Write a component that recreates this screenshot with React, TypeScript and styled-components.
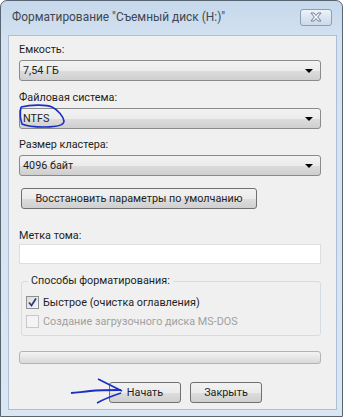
import styled, { createGlobalStyle } from 'styled-components';

const GlobalStyle = createGlobalStyle`
  html, body {
    margin: 0;
    padding: 0;
    background: #ffffff;
  }
  body {
    font-family: Roboto, "Noto Sans", sans-serif;
    font-size: 10.8px;
    color: #1e1e1e;
  }
`;

const Window = styled.div`
  position: relative;
  width: 343px;
  height: 417px;
  box-sizing: border-box;
  display: flex;
  flex-direction: column;
  border: 1px solid #5a6572;
  border-radius: 7px 7px 0 0;
  background: linear-gradient(180deg, #c6d8ec 0%, #d4e2f1 40px, #d9e6f4 100%);
  padding: 0 5px 6px 7px;
`;

const TitleBar = styled.div`
  height: 32px;
  flex: none;
  display: flex;
  align-items: center;
  justify-content: space-between;
  padding: 0 5px 2px 4px;
`;

const Title = styled.div`
  font-size: 11.9px;
  color: #3f4750;
  white-space: nowrap;
`;

const CloseButton = styled.div`
  width: 30px;
  height: 15px;
  border: 1px solid #8c9db4;
  border-radius: 3px;
  background: linear-gradient(180deg, #eef3f9 0%, #dbe5f1 50%, #ccdaea 100%);
  display: flex;
  align-items: center;
  justify-content: center;
`;

const Client = styled.div`
  flex: 1;
  display: flex;
  flex-direction: column;
  background: #f0f0f0;
  border: 1px solid #aebfd4;
  padding: 6px 15px 0 10px;
`;

const Label = styled.div<{ $top: number }>`
  margin-top: ${({ $top }) => $top}px;
  line-height: 16px;
  height: 16px;
`;

const Combo = styled.div`
  margin-top: 2px;
  height: 21px;
  box-sizing: border-box;
  border: 1px solid #8a8a8a;
  border-radius: 3px;
  background: linear-gradient(180deg, #f3f3f3 0%, #ebebeb 50%, #dddddd 51%, #cfcfcf 100%);
  display: flex;
  align-items: center;
  justify-content: space-between;
  padding: 0 7px 0 3px;
`;

const Arrow = styled.div`
  width: 0;
  height: 0;
  border-left: 4px solid transparent;
  border-right: 4px solid transparent;
  border-top: 4px solid #000000;
`;

const PushButton = styled.div<{ $width: number }>`
  width: ${({ $width }) => $width}px;
  height: 21px;
  box-sizing: border-box;
  border: 1px solid #707070;
  border-radius: 3px;
  background: linear-gradient(180deg, #f2f2f2 0%, #ebebeb 50%, #dddddd 51%, #cfcfcf 100%);
  display: flex;
  align-items: center;
  justify-content: center;
  white-space: nowrap;
`;

const ResetButton = styled(PushButton)`
  margin: 12px 0 0 2px;
`;

const TextBox = styled.div`
  height: 20px;
  box-sizing: border-box;
  border: 1px solid #dadfe4;
  background: #ffffff;
`;

const GroupBox = styled.fieldset`
  margin: 10px 0 0 2px;
  padding: 6px 0 5px 4px;
  border: 1px solid #d5dce2;
  border-radius: 3px;
  height: 62px;
  box-sizing: border-box;
  display: flex;
  flex-direction: column;
  gap: 3px;
`;

const Legend = styled.legend`
  padding: 0 3px;
  margin-left: 2px;
  line-height: 14px;
`;

const CheckRow = styled.div<{ $disabled?: boolean }>`
  display: flex;
  align-items: center;
  gap: 4px;
  height: 16px;
  color: ${({ $disabled }) => ($disabled ? '#a0a0a0' : '#1e1e1e')};
`;

const Box = styled.div<{ $disabled?: boolean }>`
  width: 13px;
  height: 13px;
  box-sizing: border-box;
  border: 1px solid ${({ $disabled }) => ($disabled ? '#c8c8c8' : '#8e8f8f')};
  background: ${({ $disabled }) =>
    $disabled ? '#f4f4f4' : 'linear-gradient(135deg, #dcdcdc 0%, #f6f6f6 100%)'};
  display: flex;
  align-items: center;
  justify-content: center;
`;

const Progress = styled.div`
  margin-top: 15px;
  height: 13px;
  box-sizing: border-box;
  border: 1px solid #b4b4b4;
  border-radius: 3px;
  background: linear-gradient(180deg, #f3f3f3 0%, #e6e6e6 50%, #dadada 100%);
`;

const ButtonRow = styled.div`
  margin-top: 18px;
  display: flex;
  gap: 9px;
  padding-left: 90px;
`;

const Scribble = styled.svg`
  position: absolute;
  left: -1px;
  top: -1px;
  pointer-events: none;
`;

function CloseGlyph(): JSX.Element {
  return (
    <svg width="14" height="10" viewBox="0 0 14 10">
      <path
        d="M2 1 L5 1 L7 3.5 L9 1 L12 1 L8.7 5 L12 9 L9 9 L7 6.5 L5 9 L2 9 L5.3 5 Z"
        fill="#f7f9fc"
        stroke="#6f7f94"
        strokeWidth="1"
        strokeLinejoin="round"
      />
    </svg>
  );
}

function Check(): JSX.Element {
  return (
    <svg width="11" height="11" viewBox="0 0 11 11">
      <path d="M2 5.5 L4.5 8.5 L9 1.5" fill="none" stroke="#2a3f8a" strokeWidth="1.8" />
    </svg>
  );
}

function App(): JSX.Element {
  return (
    <>
      <GlobalStyle />
      <Window>
        <TitleBar>
          <Title>Форматирование "Съемный диск (H:)"</Title>
          <CloseButton>
            <CloseGlyph />
          </CloseButton>
        </TitleBar>

        <Client>
          <Label $top={0}>Емкость:</Label>
          <Combo>
            7,54 ГБ
            <Arrow />
          </Combo>

          <Label $top={9}>Файловая система:</Label>
          <Combo>
            NTFS
            <Arrow />
          </Combo>

          <Label $top={8}>Размер кластера:</Label>
          <Combo>
            4096 байт
            <Arrow />
          </Combo>

          <ResetButton $width={236}>Восстановить параметры по умолчанию</ResetButton>

          <Label $top={19}>Метка тома:</Label>
          <TextBox />

          <GroupBox>
            <Legend>Способы форматирования:</Legend>
            <CheckRow>
              <Box>
                <Check />
              </Box>
              Быстрое (очистка оглавления)
            </CheckRow>
            <CheckRow $disabled>
              <Box $disabled />
              Создание загрузочного диска MS-DOS
            </CheckRow>
          </GroupBox>

          <Progress />

          <ButtonRow>
            <PushButton $width={72}>Начать</PushButton>
            <PushButton $width={72}>Закрыть</PushButton>
          </ButtonRow>
        </Client>

        {/* hand-drawn blue marks */}
        <Scribble width="346" height="419" viewBox="0 0 346 419">
          <path
            d="M21 107 C30 105 45 104 52 107 C58 110 63 116 64 121 C64 126 55 127 45 127 C35 127 26 126 22 124 C20 118 20 112 21 107"
            fill="none"
            stroke="#1a2fc4"
            strokeWidth="1.6"
          />
          <path
            d="M71 393 C78 392 84 392 90 391 C100 390 110 390 121 390"
            fill="none"
            stroke="#1a2fc4"
            strokeWidth="1.8"
          />
          <path d="M98 379 C106 383 114 387 122 391" fill="none" stroke="#1a2fc4" strokeWidth="1.6" />
          <path d="M97 403 C104 399 112 396 121 393" fill="none" stroke="#1a2fc4" strokeWidth="1.6" />
        </Scribble>
      </Window>
    </>
  );
}

export default App;
